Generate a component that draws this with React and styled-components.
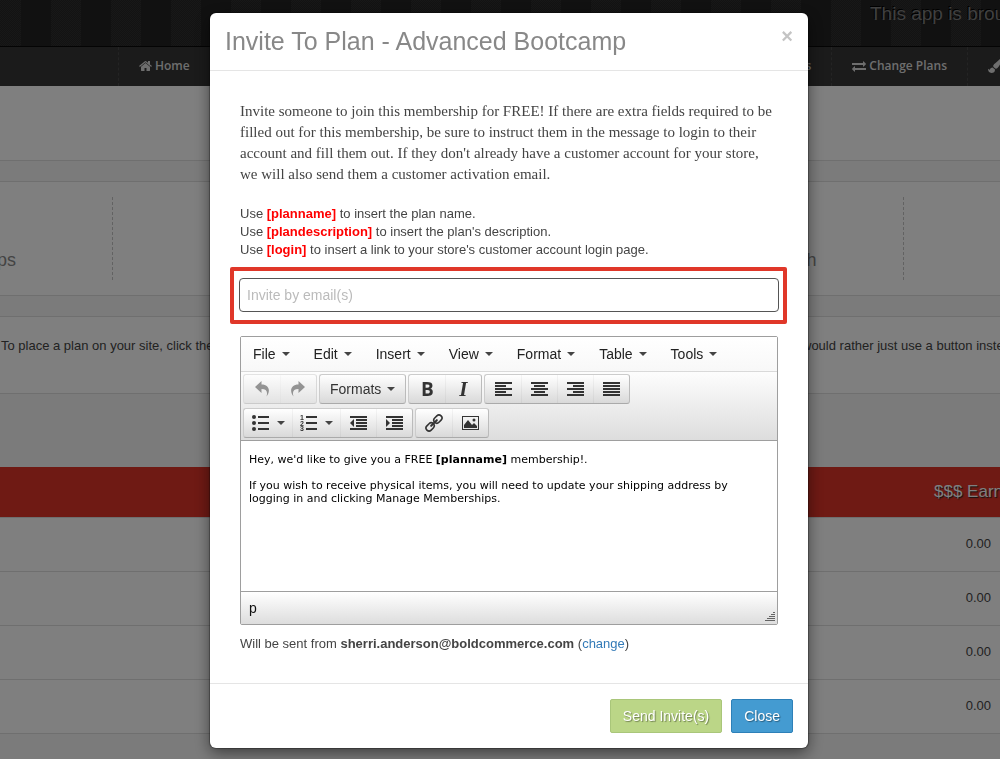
import React, { useState } from "react";
import styled, { createGlobalStyle } from "styled-components";
import { FaPaintBrush } from "react-icons/fa";

const GlobalStyle = createGlobalStyle`
  * {
    box-sizing: border-box;
  }

  body {
    margin: 0;
    background-color: #f7f7f7;
    color: #444;
    font-family: "Liberation Sans", Arial, sans-serif;
    font-size: 13px;
    line-height: 18px;
    overflow: hidden;
  }

  button, input {
    font-family: inherit;
  }
`;

/* ---------- page behind the dialog ---------- */

const TopBar = styled.header`
  display: flex;
  justify-content: flex-end;
  height: 47px;
  border-bottom: 1px solid #080808;
  background:
    repeating-linear-gradient(
      90deg,
      transparent 0 21px,
      #222 21px 51px,
      transparent 51px 60px
    ),
    repeating-conic-gradient(#262626 0 25%, #303030 0 50%) 0 0 / 2px 2px;
`;

const Slogan = styled.div`
  width: 130px;
  overflow: hidden;
  white-space: nowrap;
  color: #808080;
  font-size: 19px;
  line-height: 28px;
  text-shadow: -1px -1px 0 #000;
`;

const Nav = styled.nav`
  display: flex;
  height: 39px;
  padding-left: 118px;
  background-color: #363636;
  overflow: hidden;
`;

const NavLink = styled.a`
  display: flex;
  flex: ${(props) => (props.$grow ? "1 0 auto" : "none")};
  align-items: center;
  justify-content: ${(props) => (props.$grow ? "flex-end" : "flex-start")};
  gap: 3px;
  width: ${(props) => (props.$end ? "33px" : "auto")};
  padding: 0 ${(props) => (props.$end ? "0" : "20px")} 2px 20px;
  border-left: 1px dashed #484848;
  color: #ddd;
  font-family: "Open Sans", sans-serif;
  font-size: 12px;
  font-weight: 600;
  text-decoration: none;
  white-space: nowrap;
  overflow: hidden;

  svg {
    flex: none;
  }
`;

const Heading = styled.div`
  height: 75px;
  margin-bottom: 20px;
  border-bottom: 1px solid #dedede;
  background-color: #fff;
`;

const Panel = styled.section`
  margin-bottom: 20px;
  border: solid #dedede;
  border-width: 1px 0;
  background-color: #fff;
`;

const Stats = styled(Panel)`
  display: grid;
  grid-template-columns: 113fr 264fr 264fr 263fr 96fr;
  padding: 15px 0;
`;

const Stat = styled.div`
  display: flex;
  align-items: flex-end;
  justify-content: ${(props) => (props.$first ? "flex-end" : "center")};
  height: 83px;
  padding: 0 ${(props) => (props.$first ? "96px" : "0")} 8px 0;
  border-right: 1px dashed #c4c4c4;
  color: #888;
  font-size: 18px;
  line-height: 24px;
  overflow: hidden;

  &:last-child {
    border-right: 0;
  }
`;

const Tip = styled(Panel)`
  display: flex;
  justify-content: space-between;
  margin-bottom: 73px;
  padding: 20px 0 38px 1px;
  white-space: nowrap;
`;

const TipEnd = styled.span`
  width: 198px;
  overflow: hidden;
`;

const PlanTable = styled.table`
  width: 100%;
  border-collapse: collapse;
  table-layout: fixed;
  background-color: #fff;

  th {
    height: 50px;
    padding: 0 0 0 934px;
    background-color: #de3428;
    color: #fff;
    font-size: 17px;
    font-weight: 400;
    text-align: left;
    text-shadow: 1px 1px 1px #222;
    white-space: nowrap;
    overflow: hidden;
  }

  td {
    height: 54px;
    padding: 0 9px 0 0;
    border: solid #dedede;
    border-width: 1px 0;
    text-align: right;
  }
`;

/* ---------- dialog ---------- */

const Backdrop = styled.div`
  position: fixed;
  inset: 0;
  display: flex;
  align-items: flex-start;
  justify-content: center;
  padding: 13px 0 0 18px;
  background-color: rgba(0, 0, 0, 0.5);
  overflow: hidden;
`;

const Dialog = styled.div`
  width: 100%;
  max-width: 598px;
  border-radius: 6px;
  background-color: #fff;
  box-shadow: 0 5px 15px rgba(0, 0, 0, 0.5), 0 0 1px 1px rgba(0, 0, 0, 0.3);
`;

const DialogHeader = styled.div`
  display: flex;
  align-items: flex-start;
  justify-content: space-between;
  padding: 13px 15px 14px;
  border-bottom: 1px solid #e5e5e5;

  h4 {
    margin: 0;
    color: #888;
    font-size: 25px;
    font-weight: 400;
    line-height: 30px;
  }
`;

const CloseIcon = styled.button`
  padding: 0;
  border: 0;
  background: none;
  color: #c4c4c4;
  font-size: 20px;
  font-weight: 700;
  line-height: 20px;
  cursor: pointer;
`;

const DialogBody = styled.div`
  padding: 30px;
`;

const Intro = styled.p`
  margin: 0 0 20px;
  font-family: "Liberation Serif", "Times New Roman", serif;
  font-size: 15px;
  line-height: 21px;
`;

const Hints = styled.div`
  b {
    color: #f00;
  }
`;

const Highlight = styled.div`
  margin: 8px -9px 12px -10px;
  padding: 7px 4px 8px 5px;
  border: 4px solid #e03729;
  border-radius: 2px;
`;

const EmailInput = styled.input`
  display: block;
  width: 100%;
  height: 34px;
  padding: 0 7px;
  border: 1px solid #555;
  border-radius: 4px;
  color: #444;
  font-size: 14px;

  &::placeholder {
    color: #bbb;
  }
`;

const Editor = styled.div`
  border: 1px solid #9e9e9e;
  border-radius: 2px;
  color: #111;
  font-size: 14px;
`;

const MenuBar = styled.div`
  display: flex;
  height: 35px;
  border-bottom: 1px solid #d9d9d9;
  background: linear-gradient(#fff, #f8f8f8);
`;

const MenuButton = styled.button`
  display: flex;
  align-items: center;
  gap: 6px;
  padding: 0 12px;
  border: 0;
  background: none;
  color: #222;
  font-size: 14px;
`;

const Caret = styled.span`
  border: 4px solid transparent;
  border-top-color: #444;
  border-bottom: 0;
`;

const Toolbar = styled.div`
  display: flex;
  flex-direction: column;
  gap: 4px;
  padding: 2px;
  border-bottom: 1px solid #9e9e9e;
  background: linear-gradient(#fdfdfd, #ddd);
`;

const ToolRow = styled.div`
  display: flex;
  gap: 2px;
`;

const ToolGroup = styled.div`
  display: flex;
  height: 30px;
  border: 1px solid;
  border-color: #ccc #bbb #aaa #ccc;
  border-radius: 3px;
  background: linear-gradient(#fff, #d9d9d9);
  opacity: ${(props) => (props.$disabled ? 0.5 : 1)};
`;

const ToolButton = styled.button`
  display: flex;
  align-items: center;
  justify-content: center;
  gap: ${(props) => (props.$split ? "8px" : "6px")};
  min-width: ${(props) => (props.$split ? "48px" : "36px")};
  padding: 0 ${(props) => (props.$text ? "10px" : "0")};
  border: 0;
  background: none;
  color: #333;
  font-size: 14px;
  line-height: 20px;

  & + & {
    box-shadow: inset 1px 0 0 rgba(0, 0, 0, 0.04);
  }
`;

const BoldMark = styled.b`
  font-family: "Open Sans", sans-serif;
  font-size: 19px;
`;

const ItalicMark = styled.i`
  font-family: "Liberation Serif", serif;
  font-size: 21px;
  font-weight: 700;
`;

const Message = styled.div`
  height: 150px;
  padding: 12px 8px;
  color: #000;
  font-family: "DejaVu Sans", Verdana, sans-serif;
  font-size: 11px;
  line-height: 13px;
  outline: 0;

  p {
    margin: 0 0 13px;
  }
`;

const StatusBar = styled.div`
  display: flex;
  align-items: flex-end;
  justify-content: space-between;
  height: 33px;
  padding: 2px 2px 2px 8px;
  border-top: 1px solid #9e9e9e;
  background: linear-gradient(#fff, #ddd);

  span {
    align-self: center;
  }
`;

const Sender = styled.p`
  margin: 10px 0 0;

  a {
    color: #337ab7;
    text-decoration: none;
  }
`;

const DialogFooter = styled.div`
  display: flex;
  justify-content: flex-end;
  gap: 9px;
  padding: 15px;
  border-top: 1px solid #e5e5e5;
`;

const Button = styled.button`
  height: 34px;
  padding: 0 12px;
  border: 1px solid ${(props) => (props.$green ? "#a9c67a" : "#2d80b8")};
  border-radius: 2px;
  background-color: ${(props) => (props.$green ? "#bbd687" : "#449bd1")};
  color: #fff;
  font-size: 14px;
  text-shadow: 1px 1px 1px rgba(0, 0, 0, 0.4);
  cursor: pointer;
`;

/* ---------- icons ---------- */

const Lines = ({ rows }) => (
  <svg width="17" height="14" fill="#333" shapeRendering="crispEdges">
    {rows.map(([x, w], i) => (
      <rect key={i} x={x} y={i * 3} width={w} height="2" />
    ))}
  </svg>
);

const ALIGNS = [
  ["Align left", [[0, 17], [0, 11], [0, 17], [0, 11], [0, 17]]],
  ["Align center", [[0, 17], [3, 11], [0, 17], [3, 11], [0, 17]]],
  ["Align right", [[0, 17], [6, 11], [0, 17], [6, 11], [0, 17]]],
  ["Justify", [[0, 17], [0, 17], [0, 17], [0, 17], [0, 17]]],
];

const UndoIcon = ({ flip }) => (
  <svg width="14" height="16" viewBox="0 0 14 16">
    <path
      transform={flip ? "translate(14 0) scale(-1 1)" : undefined}
      d="M0 6 6.500 0v3.500c7.500 0 9.500 6.500 5 12 1.500-5 0-7.500-5-7.500V12z"
      fill="#333"
    />
  </svg>
);

const BulletIcon = () => (
  <svg width="17" height="16" fill="#333">
    <circle cx="2" cy="2" r="2" />
    <circle cx="2" cy="8" r="2" />
    <circle cx="2" cy="14" r="2" />
    <path d="M6 1h11v2H6zM6 7h11v2H6zM6 13h11v2H6z" />
  </svg>
);

const NumberIcon = () => (
  <svg width="17" height="16" fill="#333">
    <g fontSize="7" fontWeight="700" fontFamily="Liberation Sans">
      <text x="0" y="5">1</text>
      <text x="0" y="11">2</text>
      <text x="0" y="16">3</text>
    </g>
    <path d="M6 1h11v2H6zM6 7h11v2H6zM6 13h11v2H6z" />
  </svg>
);

const IndentIcon = ({ out }) => (
  <svg width="17" height="14" fill="#333">
    <path d="M0 0h17v2H0zM6 3h11v2H6zM6 6h11v2H6zM6 9h11v2H6zM0 12h17v2H0z" />
    <path d={out ? "M4 3v8L0 7z" : "M0 3v8l4-4z"} />
  </svg>
);

const LinkIcon = () => (
  <svg width="18" height="18" viewBox="0 0 18 18" fill="none" stroke="#333">
    <g transform="rotate(-45 9 9)" strokeWidth="1.6">
      <rect x="-1" y="6" width="9" height="6" rx="3" />
      <rect x="10" y="6" width="9" height="6" rx="3" />
      <path d="M5 9h8" strokeWidth="2" strokeLinecap="round" />
    </g>
  </svg>
);

const ImageIcon = () => (
  <svg width="17" height="14" fill="#333">
    <path fillRule="evenodd" d="M0 0h17v14H0zM1 1v12h15V1z" />
    <path d="M2 12V9l4-5 4 5 2-2 3 3v2z" />
    <circle cx="12" cy="4" r="1.5" />
  </svg>
);

const HomeIcon = () => (
  <svg width="13" height="14" viewBox="0 0 1664 1792" fill="#ddd">
    <path d="M1408 992v480q0 26-19 45t-45 19h-384v-384h-256v384h-384q-26 0-45-19t-19-45v-480q0-1 .5-3t.5-3l575-474 575 474q1 2 1 6zm223-69l-62 74q-8 9-21 11h-3q-13 0-21-7l-692-577-692 577q-12 8-24 7-13-2-21-11l-62-74q-8-10-7-23.500t11-21.500l719-599q32-26 76-26t76 26l244 204v-195q0-14 9-23t23-9h192q14 0 23 9t9 23v408l219 182q10 8 11 21.500t-7 23.500z" />
  </svg>
);

const SwapIcon = () => (
  <svg width="14" height="14" viewBox="0 0 1792 1792" fill="#ddd">
    <path d="M1792 1184v192q0 13-9.500 22.500t-22.500 9.500h-1376v192q0 13-9.500 22.500t-22.500 9.500q-12 0-24-10l-319-320q-9-9-9-22 0-14 9-23l320-320q9-9 23-9 13 0 22.500 9.500t9.500 22.500v192h1376q13 0 22.500 9.500t9.500 22.500zm0-544q0 14-9 23l-320 320q-9 9-23 9-13 0-22.500-9.500t-9.500-22.500v-192h-1376q-13 0-22.500-9.500t-9.500-22.500v-192q0-13 9.500-22.500t22.500-9.500h1376v-192q0-14 9-23t23-9q12 0 24 10l319 319q9 9 9 23z" />
  </svg>
);

const ResizeGrip = () => (
  <svg width="10" height="10" fill="#444" shapeRendering="crispEdges">
    {[0, 1, 2, 3, 4].map((row) => (
      <rect
        key={row}
        x={8 - row * 2}
        y={row * 2}
        width={2 + row * 2}
        height="1"
        opacity="0.8"
      />
    ))}
  </svg>
);

const MENUS = ["File", "Edit", "Insert", "View", "Format", "Table", "Tools"];

const App = () => {
  const [emails, setEmails] = useState("");

  return (
    <>
      <GlobalStyle />
      <TopBar>
        <Slogan>This app is brought to you by</Slogan>
      </TopBar>
      <Nav>
        <NavLink href="#home">
          <HomeIcon /> Home
        </NavLink>
        <NavLink href="#members" $grow>
          Members
        </NavLink>
        <NavLink href="#plans">
          <SwapIcon /> Change Plans
        </NavLink>
        <NavLink href="#design" aria-label="Design" $end>
          <FaPaintBrush size={14} />
        </NavLink>
      </Nav>
      <Heading />
      <Stats>
        <Stat $first>Memberships</Stat>
        <Stat />
        <Stat />
        <Stat>This Month</Stat>
        <Stat />
      </Stats>
      <Tip>
        <span>To place a plan on your site, click the</span>
        <TipEnd>would rather just use a button instead</TipEnd>
      </Tip>
      <PlanTable>
        <thead>
          <tr>
            <th>$$$ Earned</th>
          </tr>
        </thead>
        <tbody>
          {["0.00", "0.00", "0.00", "0.00"].map((earned, i) => (
            <tr key={i}>
              <td>{earned}</td>
            </tr>
          ))}
        </tbody>
      </PlanTable>

      <Backdrop>
        <Dialog role="dialog" aria-labelledby="dialog-title">
          <DialogHeader>
            <h4 id="dialog-title">Invite To Plan - Advanced Bootcamp</h4>
            <CloseIcon aria-label="Close dialog">×</CloseIcon>
          </DialogHeader>
          <DialogBody>
            <Intro>
              Invite someone to join this membership for FREE! If there are extra
              fields required to be filled out for this membership, be sure to
              instruct them in the message to login to their account and fill
              them out. If they don't already have a customer account for your
              store, we will also send them a customer activation email.
            </Intro>
            <Hints>
              <div>
                Use <b>[planname]</b> to insert the plan name.
              </div>
              <div>
                Use <b>[plandescription]</b> to insert the plan's description.
              </div>
              <div>
                Use <b>[login]</b> to insert a link to your store's customer
                account login page.
              </div>
            </Hints>
            <Highlight>
              <EmailInput
                aria-label="Invite by email(s)"
                placeholder="Invite by email(s)"
                value={emails}
                onChange={(e) => setEmails(e.target.value)}
              />
            </Highlight>
            <Editor>
              <MenuBar>
                {MENUS.map((menu) => (
                  <MenuButton key={menu}>
                    {menu} <Caret />
                  </MenuButton>
                ))}
              </MenuBar>
              <Toolbar>
                <ToolRow>
                  <ToolGroup $disabled>
                    <ToolButton aria-label="Undo" disabled>
                      <UndoIcon />
                    </ToolButton>
                    <ToolButton aria-label="Redo" disabled>
                      <UndoIcon flip />
                    </ToolButton>
                  </ToolGroup>
                  <ToolGroup>
                    <ToolButton $text>
                      Formats <Caret />
                    </ToolButton>
                  </ToolGroup>
                  <ToolGroup>
                    <ToolButton aria-label="Bold">
                      <BoldMark>B</BoldMark>
                    </ToolButton>
                    <ToolButton aria-label="Italic">
                      <ItalicMark>I</ItalicMark>
                    </ToolButton>
                  </ToolGroup>
                  <ToolGroup>
                    {ALIGNS.map(([label, rows]) => (
                      <ToolButton key={label} aria-label={label}>
                        <Lines rows={rows} />
                      </ToolButton>
                    ))}
                  </ToolGroup>
                </ToolRow>
                <ToolRow>
                  <ToolGroup>
                    <ToolButton aria-label="Bullet list" $split>
                      <BulletIcon /> <Caret />
                    </ToolButton>
                    <ToolButton aria-label="Numbered list" $split>
                      <NumberIcon /> <Caret />
                    </ToolButton>
                    <ToolButton aria-label="Decrease indent">
                      <IndentIcon out />
                    </ToolButton>
                    <ToolButton aria-label="Increase indent">
                      <IndentIcon />
                    </ToolButton>
                  </ToolGroup>
                  <ToolGroup>
                    <ToolButton aria-label="Insert link">
                      <LinkIcon />
                    </ToolButton>
                    <ToolButton aria-label="Insert image">
                      <ImageIcon />
                    </ToolButton>
                  </ToolGroup>
                </ToolRow>
              </Toolbar>
              <Message contentEditable suppressContentEditableWarning>
                <p>
                  Hey, we'd like to give you a FREE <b>[planname]</b> membership!.
                </p>
                <p>
                  If you wish to receive physical items, you will need to update
                  your shipping address by logging in and clicking Manage
                  Memberships.
                </p>
              </Message>
              <StatusBar>
                <span>p</span>
                <ResizeGrip />
              </StatusBar>
            </Editor>
            <Sender>
              Will be sent from <b>sherri.anderson@boldcommerce.com</b> (
              <a href="#change">change</a>)
            </Sender>
          </DialogBody>
          <DialogFooter>
            <Button $green>Send Invite(s)</Button>
            <Button>Close</Button>
          </DialogFooter>
        </Dialog>
      </Backdrop>
    </>
  );
};

export default App;
